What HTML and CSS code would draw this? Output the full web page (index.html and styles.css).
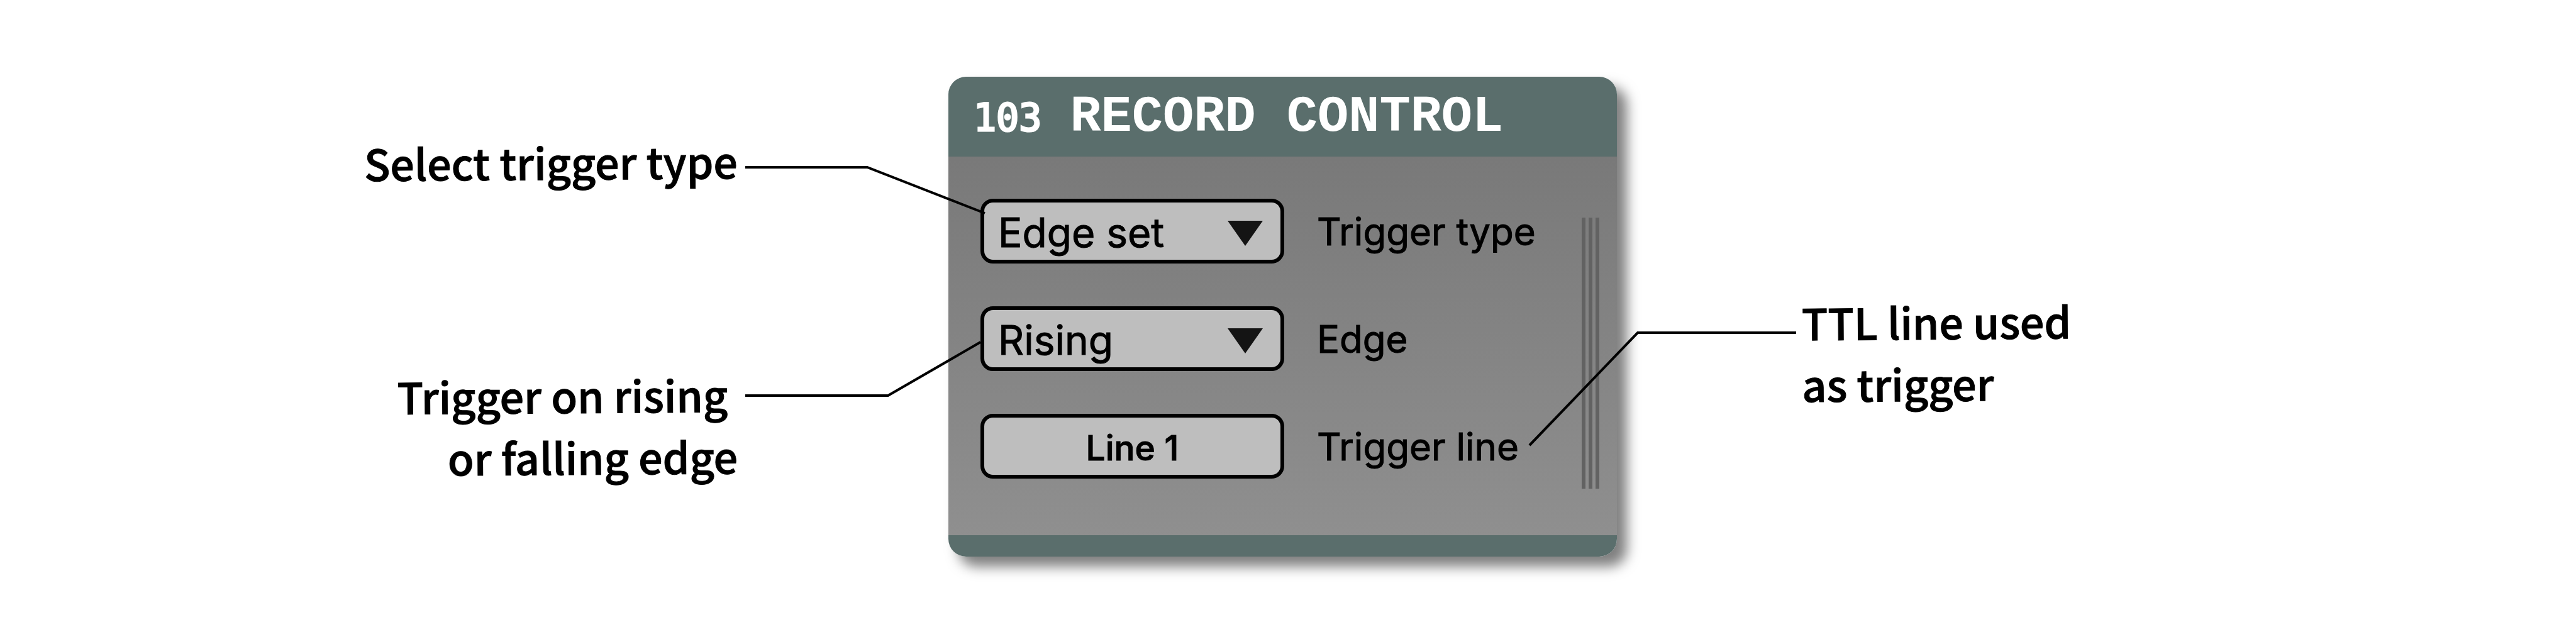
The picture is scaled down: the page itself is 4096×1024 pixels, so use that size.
FILE: index.html
```html
<!DOCTYPE html>
<html lang="en">
<head>
<meta charset="utf-8">
<title>Record Control</title>
<link rel="stylesheet" href="styles.css">
</head>
<body>
<main class="figure">
  <div class="notes notes-left">
    <p class="note">Select trigger type</p>
    <p class="note">Trigger on rising <br>or falling edge</p>
  </div>
  <section class="panel">
    <header class="panel-header">
      <span class="panel-id">103</span>
      <h1 class="panel-title">RECORD CONTROL</h1>
    </header>
    <div class="panel-body">
      <form class="settings">
        <div class="row">
          <div class="select-wrap">
            <select class="control" id="trigger-type"><option>Edge set</option><option>Edge toggle</option></select>
            <svg class="arrow" viewBox="0 0 56 40" aria-hidden="true"><path d="M0 0H56L28 40Z"/></svg>
          </div>
          <label class="label" for="trigger-type">Trigger type</label>
        </div>
        <div class="row">
          <div class="select-wrap">
            <select class="control" id="edge"><option>Rising</option><option>Falling</option></select>
            <svg class="arrow" viewBox="0 0 56 40" aria-hidden="true"><path d="M0 0H56L28 40Z"/></svg>
          </div>
          <label class="label" for="edge">Edge</label>
        </div>
        <div class="row">
          <button class="control control-button" id="line" type="button">Line 1</button>
          <label class="label" for="line">Trigger line</label>
        </div>
      </form>
      <div class="grip"><span class="grip-bar"></span><span class="grip-bar"></span><span class="grip-bar"></span></div>
    </div>
    <footer class="panel-footer"></footer>
  </section>
  <div class="notes notes-right">
    <p class="note">TTL line used<br>as trigger</p>
  </div>
  <svg class="leaders" viewBox="0 0 4096 1024" aria-hidden="true">
    <path d="M1185 266H1379L1566 339"/>
    <path d="M1185 629H1412L1559 544"/>
    <path d="M2856 529H2604L2432 708"/>
  </svg>
</main>
</body>
</html>
```
FILE: styles.css
```css
* {
  box-sizing: border-box;
}

body {
  margin: 0;
  background: #fff;
  color: #000;
  font-family: Inter, sans-serif;
}

.figure {
  position: relative;
  display: grid;
  grid-template-columns: 1508fr 1063fr 1525fr;
  align-items: start;
  padding: 122px 0 140px;
}

.notes {
  display: flex;
  flex-direction: column;
  font-family: "Noto Sans CJK SC", sans-serif;
  font-size: 68px;
  font-weight: 500;
  line-height: 98px;
  -webkit-text-stroke: 1px #000;
}

.notes-left {
  align-items: flex-end;
  gap: 273px;
  padding: 86px 335px 0 0;
  text-align: right;
}

.notes-right {
  padding: 337px 0 0 294px;
}

.note {
  margin: 0;
  white-space: pre;
  transform: rotate(-0.4deg);
}

.panel {
  display: flex;
  flex-direction: column;
  border-radius: 28px;
  box-shadow: 16px 16px 20px rgba(0, 0, 0, 0.5);
  overflow: hidden;
}

.panel-header {
  display: flex;
  align-items: baseline;
  gap: 45px;
  padding: 3px 40px 0;
  background: #5a6e6c;
  color: #fff;
  line-height: 123px;
}

.panel-id {
  font-family: "DejaVu Sans Mono", monospace;
  font-size: 60px;
  -webkit-text-stroke: 3px #fff;
}

.panel-title {
  margin: 0;
  font-family: "Liberation Mono", monospace;
  font-size: 82px;
  font-weight: 700;
  white-space: nowrap;
}

.panel-body {
  display: flex;
  justify-content: space-between;
  padding: 67px 28px 74px 51px;
  background: linear-gradient(#797979, #8f8f8f);
}

.settings {
  display: flex;
  flex-direction: column;
  gap: 68px;
  padding-bottom: 16px;
}

.row {
  display: flex;
  align-items: center;
  gap: 52px;
}

.select-wrap {
  position: relative;
}

.control {
  display: block;
  width: 483px;
  height: 103px;
  margin: 0;
  padding: 4px 22px 0;
  border: 6px solid #000;
  border-radius: 20px;
  background: #bebebe;
  color: #000;
  font: 400 64px Inter, sans-serif;
  -webkit-text-stroke: 1px #000;
  appearance: none;
}

.control-button {
  font-size: 55px;
  font-weight: 500;
  text-align: center;
}

.arrow {
  position: absolute;
  top: 35px;
  right: 34px;
  width: 56px;
  height: 40px;
  fill: #141414;
  pointer-events: none;
}

.label {
  font-size: 60px;
  white-space: nowrap;
  -webkit-text-stroke: 1px #000;
}

.grip {
  display: flex;
  gap: 5px;
  padding-top: 30px;
}

.grip-bar {
  width: 6px;
  background: #626262;
}

.panel-footer {
  height: 34px;
  background: #5a6e6c;
}

.leaders {
  position: absolute;
  top: 0;
  left: 0;
  width: 100%;
  fill: none;
  stroke: #000;
  stroke-width: 4px;
  pointer-events: none;
}
```
